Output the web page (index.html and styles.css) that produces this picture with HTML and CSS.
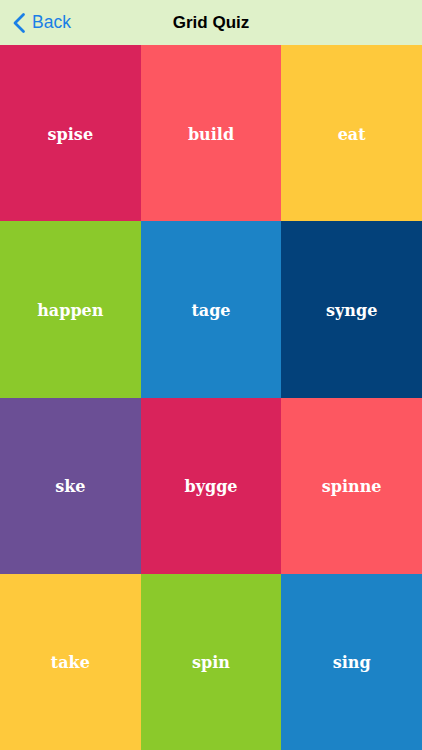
FILE: index.html
```html
<!DOCTYPE html>
<html>
<head>
<meta charset="utf-8">
<link rel="stylesheet" href="styles.css">
</head>
<body>
<div class="screen">
  <header class="nav">
    <div class="back">
      <svg class="chev" width="14" height="22" viewBox="0 0 14 22"><path d="M11.5 2.5 L3 11 L11.5 19.5" fill="none" stroke="#1a7fe6" stroke-width="2.8" stroke-linecap="round" stroke-linejoin="round"/></svg>
      <span>Back</span>
    </div>
    <div class="title">Grid Quiz</div>
  </header>
  <main class="grid">
    <div class="tile crimson">spise</div>
    <div class="tile coral">build</div>
    <div class="tile yellow">eat</div>
    <div class="tile green">happen</div>
    <div class="tile blue">tage</div>
    <div class="tile navy">synge</div>
    <div class="tile purple">ske</div>
    <div class="tile crimson">bygge</div>
    <div class="tile coral">spinne</div>
    <div class="tile yellow">take</div>
    <div class="tile green">spin</div>
    <div class="tile blue">sing</div>
  </main>
</div>
</body>
</html>
```
FILE: styles.css
```css
html, body { margin: 0; padding: 0; }
body { width: 422px; height: 750px; overflow: hidden; }
.screen { display: flex; flex-direction: column; height: 750px; }
.nav {
  height: 45px; flex: none; background: #dff1c9; position: relative;
  display: flex; align-items: center; justify-content: center;
  font-family: "Liberation Sans", Arial, sans-serif;
}
.back {
  position: absolute; left: 12px; top: 0; height: 45px;
  display: flex; align-items: center; gap: 6px;
  color: #1a7fe6; font-size: 17.5px;
}
.chev { display: block; }
.title { font-weight: bold; font-size: 17px; color: #000; }
.grid {
  flex: 1; display: grid;
  grid-template-columns: repeat(3, 1fr);
  grid-template-rows: repeat(4, 1fr);
}
.tile {
  display: flex; align-items: center; justify-content: center;
  color: #fff; font-family: "DejaVu Serif", "Liberation Serif", serif;
  font-weight: bold; font-size: 16px; padding-top: 2px;
}
.crimson { background: #d9235b; }
.coral { background: #fd5761; }
.yellow { background: #fec93c; }
.green { background: #8bc92b; }
.blue { background: #1c83c6; }
.navy { background: #03417a; }
.purple { background: #6b4f95; }
```
